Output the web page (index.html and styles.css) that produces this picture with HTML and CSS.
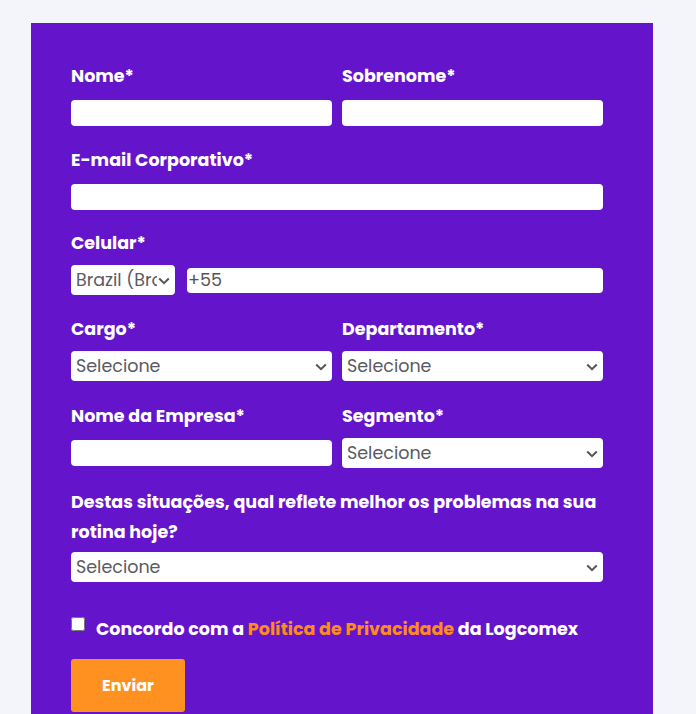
FILE: index.html
```html
<!DOCTYPE html>
<html lang="pt-BR">
<head>
<meta charset="utf-8">
<title>Formulário Logcomex</title>
<link rel="stylesheet" href="styles.css">
</head>
<body>
<main class="page">
  <form class="panel">
    <div class="row row--two">
      <div class="field">
        <label class="label" for="nome">Nome*</label>
        <div class="slot"><input class="input" id="nome" type="text"></div>
      </div>
      <div class="field">
        <label class="label" for="sobrenome">Sobrenome*</label>
        <div class="slot"><input class="input" id="sobrenome" type="text"></div>
      </div>
    </div>

    <div class="row">
      <div class="field">
        <label class="label" for="email">E-mail Corporativo*</label>
        <div class="slot"><input class="input" id="email" type="email"></div>
      </div>
    </div>

    <div class="row">
      <div class="field">
        <label class="label" for="cel">Celular*</label>
        <div class="slot slot--phone">
          <div class="select-wrap select-wrap--country">
            <select class="select" aria-label="País"><option>Brazil (Brasil)</option></select>
            <svg class="chev" viewBox="0 0 12 8" aria-hidden="true"><path d="M1.2 1.5 6 6.2l4.8-4.7"/></svg>
          </div>
          <input class="input input--phone" id="cel" type="tel" value="+55">
        </div>
      </div>
    </div>

    <div class="row row--two row--shift3">
      <div class="field">
        <label class="label">Cargo*</label>
        <div class="slot">
          <div class="select-wrap">
            <select class="select"><option>Selecione</option></select>
            <svg class="chev" viewBox="0 0 12 8" aria-hidden="true"><path d="M1.2 1.5 6 6.2l4.8-4.7"/></svg>
          </div>
        </div>
      </div>
      <div class="field">
        <label class="label">Departamento*</label>
        <div class="slot">
          <div class="select-wrap">
            <select class="select"><option>Selecione</option></select>
            <svg class="chev" viewBox="0 0 12 8" aria-hidden="true"><path d="M1.2 1.5 6 6.2l4.8-4.7"/></svg>
          </div>
        </div>
      </div>
    </div>

    <div class="row row--two row--shift1">
      <div class="field">
        <label class="label" for="empresa">Nome da Empresa*</label>
        <div class="slot"><input class="input" id="empresa" type="text"></div>
      </div>
      <div class="field">
        <label class="label">Segmento*</label>
        <div class="slot">
          <div class="select-wrap">
            <select class="select"><option>Selecione</option></select>
            <svg class="chev" viewBox="0 0 12 8" aria-hidden="true"><path d="M1.2 1.5 6 6.2l4.8-4.7"/></svg>
          </div>
        </div>
      </div>
    </div>

    <div class="row row--tight">
      <div class="field">
        <label class="label label--long">Destas situações, qual reflete melhor os problemas na sua rotina hoje?</label>
        <div class="slot">
          <div class="select-wrap">
            <select class="select"><option>Selecione</option></select>
            <svg class="chev" viewBox="0 0 12 8" aria-hidden="true"><path d="M1.2 1.5 6 6.2l4.8-4.7"/></svg>
          </div>
        </div>
      </div>
    </div>

    <div class="consent">
      <input class="check" type="checkbox" id="aceite">
      <label class="consent-text" for="aceite">Concordo com a <a class="link" href="#">Política de Privacidade</a> da Logcomex</label>
    </div>

    <div class="actions">
      <button class="btn" type="button">Enviar</button>
    </div>
  </form>
</main>
</body>
</html>
```

FILE: styles.css
```css
* { box-sizing: border-box; }

html, body {
  margin: 0;
  padding: 0;
  background: #f4f5fa;
  font-family: "Poppins", "Open Sans", sans-serif;
}

.page {
  padding: 23px 0 0 31px;
}

.panel {
  width: 622px;
  background: #6414cb;
  padding: 41px 50px 60px 40px;
  display: flex;
  flex-direction: column;
}

.row {
  display: grid;
  grid-template-columns: minmax(0, 1fr);
  column-gap: 10px;
  margin-top: 19.5px;
}
.row:first-child { margin-top: 0; }
.row--two { grid-template-columns: minmax(0, 1fr) minmax(0, 1fr); }
.row--shift3 { margin-top: 22px; }
.row--shift1 { margin-top: 22.5px; }
.row--tight { margin-top: 19px; }

.field {
  display: flex;
  flex-direction: column;
  min-width: 0;
}

.label {
  color: #fff;
  font-size: 17.5px;
  font-weight: 700;
  line-height: 24px;
  margin-bottom: 10px;
}
.label--long {
  line-height: 30px;
  margin-bottom: 5.5px;
}

.slot {
  height: 30px;
  display: flex;
  align-items: center;
}
.slot--phone { gap: 12px; }

.input {
  display: block;
  width: 100%;
  height: 26px;
  border: 0;
  border-radius: 4px;
  background: #fff;
  padding: 0 1px;
  font-family: inherit;
  font-size: 17.5px;
  color: #555;
  outline: none;
}
.input--phone {
  flex: 1;
  height: 25px;
}

.select-wrap {
  position: relative;
  width: 100%;
  height: 30px;
}
.select-wrap--country {
  width: 104px;
  flex: none;
}

.select {
  appearance: none;
  -webkit-appearance: none;
  display: block;
  width: 100%;
  height: 30px;
  border: 0;
  border-radius: 4px;
  background: #fff;
  padding: 0 18px 0 5px;
  font-family: inherit;
  font-size: 17.5px;
  color: #5a5a62;
  outline: none;
}

.chev {
  position: absolute;
  right: 5px;
  top: 50%;
  width: 12px;
  height: 8px;
  margin-top: -3px;
  fill: none;
  stroke: #555;
  stroke-width: 2;
  pointer-events: none;
}

.consent {
  display: flex;
  align-items: flex-start;
  gap: 11px;
  margin-top: 34.5px;
}
.check {
  margin: 0;
  width: 14px;
  height: 14px;
  flex: none;
}
.consent-text {
  color: #fff;
  font-size: 17.5px;
  font-weight: 700;
  line-height: 24px;
}
.link {
  color: #ff8c1a;
  text-decoration: none;
}

.actions {
  margin-top: 18px;
}
.btn {
  width: 114px;
  height: 53px;
  border: 0;
  border-radius: 3px;
  background: #ff9120;
  color: #fff;
  font-family: inherit;
  font-size: 16px;
  font-weight: 700;
  cursor: pointer;
}
```
